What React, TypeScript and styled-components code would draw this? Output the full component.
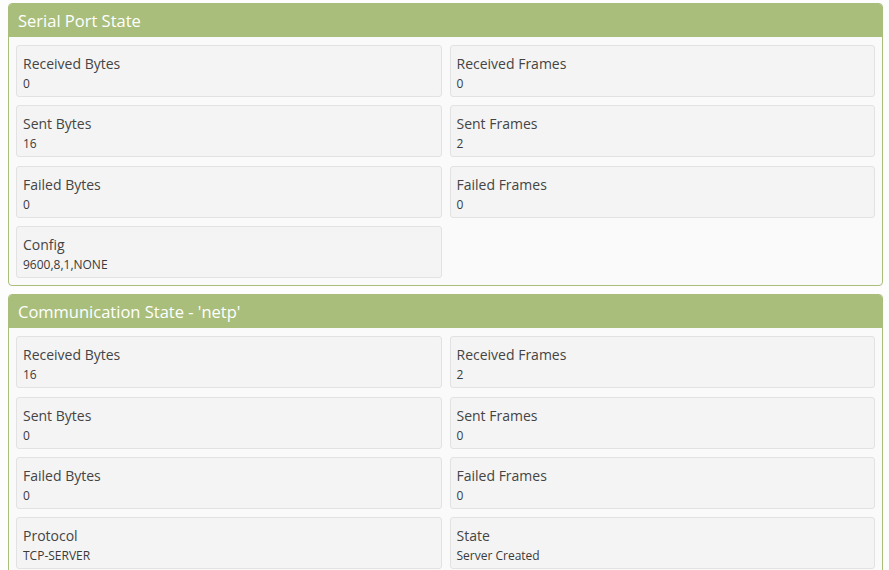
import React from 'react';
import styled, { createGlobalStyle } from 'styled-components';

const GlobalStyle = createGlobalStyle`
  body {
    margin: 0;
    background: #fdfdfd;
    font-family: "Open Sans", "Noto Sans", "Liberation Sans", sans-serif;
  }
`;

const Page = styled.div`
  display: flex;
  flex-direction: column;
  gap: 8px;
  padding: 3px 6px 0 8px;
`;

const Panel = styled.section`
  border: 1px solid #a9be7b;
  border-radius: 4px;
  background: #fafafa;
  overflow: hidden;
`;

const PanelHeader = styled.div`
  height: 33px;
  display: flex;
  align-items: center;
  padding-left: 9px;
  background: #a9be7b;
  color: #fff;
  font-size: 16.5px;
`;

const Grid = styled.div`
  display: grid;
  grid-template-columns: 1fr 1fr;
  column-gap: 8px;
  row-gap: 8.4px;
  padding: 8px 7px 7px 7px;
`;

const Cell = styled.div`
  height: 52px;
  box-sizing: border-box;
  padding: 7px 6px 0;
  background: #f4f4f4;
  border: 1px solid #e2e2e2;
  border-radius: 3px;
`;

const Label = styled.div`
  font-size: 14px;
  line-height: 21px;
  color: #444;
`;

const Value = styled.div`
  font-size: 12px;
  line-height: 19px;
  color: #3a3a3a;
`;

type Item = [string, string];

const serial: Item[] = [
  ['Received Bytes', '0'],
  ['Received Frames', '0'],
  ['Sent Bytes', '16'],
  ['Sent Frames', '2'],
  ['Failed Bytes', '0'],
  ['Failed Frames', '0'],
  ['Config', '9600,8,1,NONE'],
];

const comm: Item[] = [
  ['Received Bytes', '16'],
  ['Received Frames', '2'],
  ['Sent Bytes', '0'],
  ['Sent Frames', '0'],
  ['Failed Bytes', '0'],
  ['Failed Frames', '0'],
  ['Protocol', 'TCP-SERVER'],
  ['State', 'Server Created'],
];

const StatePanel = ({ title, items }: { title: string; items: Item[] }) => (
  <Panel>
    <PanelHeader>{title}</PanelHeader>
    <Grid>
      {items.map(([label, value]) => (
        <Cell key={label}>
          <Label>{label}</Label>
          <Value>{value}</Value>
        </Cell>
      ))}
    </Grid>
  </Panel>
);

const App = () => (
  <>
    <GlobalStyle />
    <Page>
      <StatePanel title="Serial Port State" items={serial} />
      <StatePanel title="Communication State - 'netp'" items={comm} />
    </Page>
  </>
);

export default App;
